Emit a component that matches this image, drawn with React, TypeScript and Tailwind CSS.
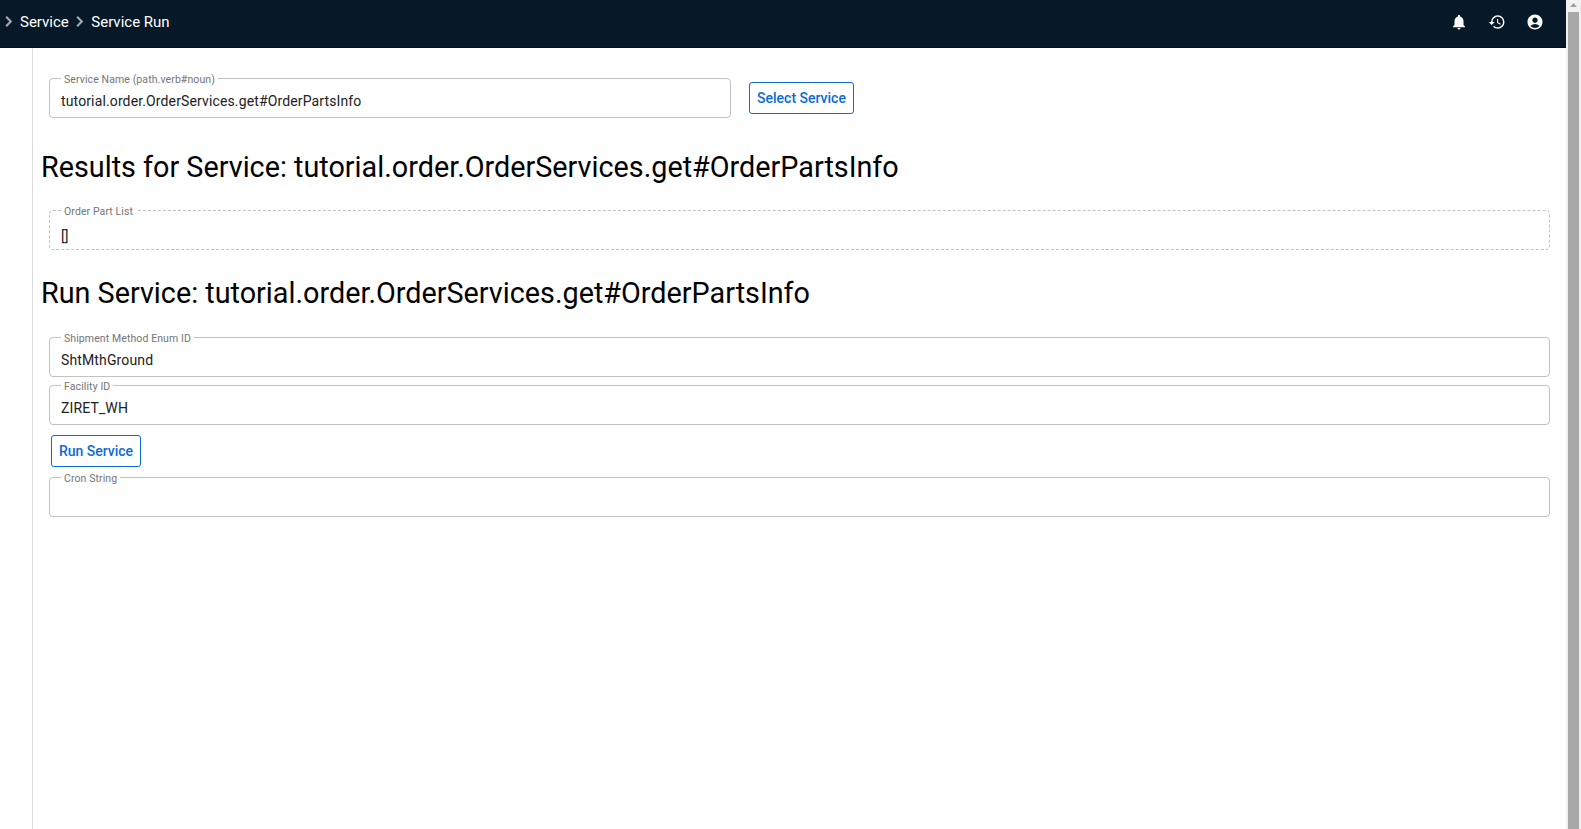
import { MdAccountCircle, MdHistory, MdNotifications } from "react-icons/md";

type FieldProps = {
  label: string;
  value?: string;
  dashed?: boolean;
  className?: string;
};

function Chevron({ className = "" }: { className?: string }) {
  return (
    <svg viewBox="0 0 24 24" fill="none" className={`size-[21px] shrink-0 ${className}`}>
      <path d="M9.3 6.7 14.6 12l-5.3 5.3" stroke="#a5a9ad" strokeWidth="2.4" />
    </svg>
  );
}

function Field({ label, value = "", dashed = false, className = "" }: FieldProps) {
  return (
    <div
      className={`relative h-10 rounded border border-[#c2c2c2] px-[11px] ${dashed ? "border-dashed pt-[13px]" : "border-solid pt-[10px]"} ${className}`}
    >
      <span className="absolute left-[11px] -top-[7px] bg-white px-[3px] text-[10.5px] leading-[15px] tracking-[0.1px] whitespace-nowrap text-[#757575]">
        {label}
      </span>
      <div className="text-sm leading-6 tracking-[0.131px] text-[#212121]">{value}</div>
    </div>
  );
}

function OutlineButton({ children, className = "" }: { children: string; className?: string }) {
  return (
    <button
      className={`flex h-8 shrink-0 items-center justify-center rounded-[3px] border border-[#0b6bd8] text-sm font-medium whitespace-nowrap text-[#0b6bd8] ${className}`}
    >
      {children}
    </button>
  );
}

export default function App() {
  return (
    <div className="flex h-[829px] w-[1581px] overflow-hidden bg-white font-['Roboto',sans-serif] text-black">
      <div className="flex min-w-0 flex-1 flex-col">
        <header className="flex h-12 shrink-0 items-center border-b border-[#031020] bg-[#071929] pb-1 text-white">
          <nav className="flex items-center text-[15px] leading-5">
            <Chevron className="-ml-[2px]" />
            <span className="ml-px">Service</span>
            <Chevron className="ml-[0.5px]" />
            <span className="ml-px">Service Run</span>
          </nav>
          <div className="mr-[22px] ml-auto flex items-center gap-5">
            <MdNotifications className="size-[18px]" />
            <MdHistory className="size-[18px]" />
            <MdAccountCircle className="size-[18px]" />
          </div>
        </header>
        <main className="ml-8 flex flex-1 flex-col border-l border-[#dcdcdc] pt-[30px] pr-4 pl-2">
          <div className="flex pl-2">
            <Field
              label="Service Name (path.verb#noun)"
              value="tutorial.order.OrderServices.get#OrderPartsInfo"
              className="w-[682px]"
            />
            <OutlineButton className="mt-1 ml-[18px] w-[105px]">Select Service</OutlineButton>
          </div>
          <h1 className="mt-[29px] text-[28.77px] leading-10 whitespace-nowrap">
            Results for Service: tutorial.order.OrderServices.get#OrderPartsInfo
          </h1>
          <Field label="Order Part List" value="[]" dashed className="mt-[23px] ml-2" />
          <h1 className="mt-[23px] text-[28.77px] leading-10 whitespace-nowrap">
            Run Service: tutorial.order.OrderServices.get#OrderPartsInfo
          </h1>
          <Field label="Shipment Method Enum ID" value="ShtMthGround" className="mt-6 ml-2" />
          <Field label="Facility ID" value="ZIRET_WH" className="mt-2 ml-2" />
          <OutlineButton className="mt-[10px] ml-[10px] w-[90px]">Run Service</OutlineButton>
          <Field label="Cron String" className="mt-[10px] ml-2" />
        </main>
      </div>
      <div className="flex w-[15px] shrink-0 flex-col items-center bg-[#f1f1f1]">
        <svg viewBox="0 0 15 12" className="h-3 w-[15px] shrink-0">
          <path d="M4 7h7L7.5 3z" fill="#a0a0a0" />
        </svg>
        <div className="mr-px ml-px w-[11px] flex-1 bg-[#a8a8a8]" />
      </div>
    </div>
  );
}
